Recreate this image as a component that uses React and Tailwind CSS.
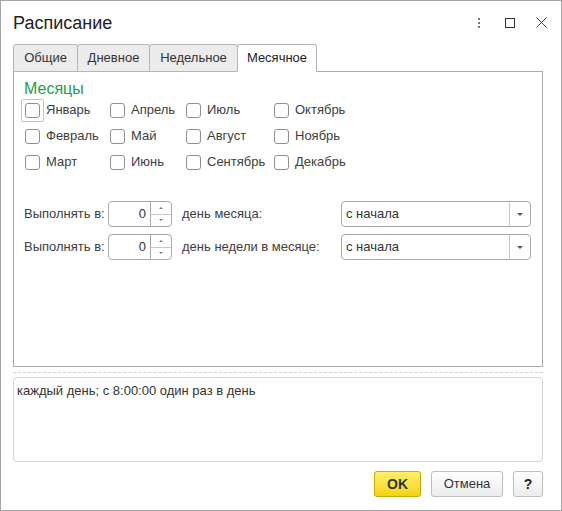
import React, { useState } from "react";

const MONTHS = [
  ["Январь", "Февраль", "Март"],
  ["Апрель", "Май", "Июнь"],
  ["Июль", "Август", "Сентябрь"],
  ["Октябрь", "Ноябрь", "Декабрь"],
];

const COL_WIDTHS = ["w-[85px]", "w-[76px]", "w-[88px]", "w-[90px]"];

const TABS = [
  { name: "Общие", w: "w-[65px]" },
  { name: "Дневное", w: "w-[73px]" },
  { name: "Недельное", w: "w-[89px]" },
  { name: "Месячное", w: "w-[80px]" },
];

const Checkbox = ({ label, checked, focused, onToggle }) => (
  <label className="flex items-center h-[26px] cursor-pointer select-none">
    <span
      className={`flex items-center justify-center w-[23px] h-[23px] -ml-[4px] rounded-[2px] border ${
        focused ? "border-[#f2c94c]" : "border-transparent"
      }`}
      onClick={onToggle}
    >
      <span className="w-[15px] h-[15px] rounded-[3px] border border-[#8f8f8f] bg-white flex items-center justify-center text-[11px] leading-none">
        {checked ? "✓" : ""}
      </span>
    </span>
    <span className="ml-[2px] text-[13px] text-[#404040]">{label}</span>
  </label>
);

const Spinner = ({ value }) => (
  <div className="flex h-[26px] w-[64px] border border-[#a9a9a9] rounded-[4px] bg-white">
    <div className="flex-1 text-right pr-[4px] text-[13px] leading-[24px] text-[#333]">{value}</div>
    <div className="w-[21px] border-l border-[#a9a9a9] flex flex-col">
      <div className="flex-1 flex items-center justify-center border-b border-[#c8c8c8]">
        <span className="w-0 h-0 border-l-[2px] border-r-[2px] border-b-[2px] border-l-transparent border-r-transparent border-b-[#777]" />
      </div>
      <div className="flex-1 flex items-center justify-center">
        <span className="w-0 h-0 border-l-[2px] border-r-[2px] border-t-[2px] border-l-transparent border-r-transparent border-t-[#777]" />
      </div>
    </div>
  </div>
);

const Select = ({ value }) => (
  <div className="flex h-[26px] w-[190px] border border-[#a9a9a9] rounded-[4px] bg-white">
    <div className="flex-1 pl-[4px] text-[13px] leading-[24px] text-[#333]">{value}</div>
    <div className="w-[21px] border-l border-[#c8c8c8] flex items-center justify-center">
      <span className="w-0 h-0 border-l-[3px] border-r-[3px] border-t-[3px] border-l-transparent border-r-transparent border-t-[#555]" />
    </div>
  </div>
);

export default function App() {
  const [checked, setChecked] = useState({});
  const toggle = (m) => setChecked({ ...checked, [m]: !checked[m] });

  return (
    <div
      className="w-[562px] h-[511px] bg-white border border-[#a3a3a3] flex flex-col text-[#333]"
      style={{ fontFamily: '"Liberation Sans", Arial, sans-serif' }}
    >
      {/* Title bar */}
      <div className="h-[43px] flex items-center pl-[12px] pr-[14px] shrink-0">
        <h1 className="text-[18px] text-[#222] flex-1 pt-[1px]">Расписание</h1>
        <div className="flex items-center">
          <span className="flex flex-col gap-[2px] mr-[25px]">
            <span className="w-[2px] h-[2px] bg-[#777]" />
            <span className="w-[2px] h-[2px] bg-[#777]" />
            <span className="w-[2px] h-[2px] bg-[#777]" />
          </span>
          <span className="w-[10px] h-[10px] border border-[#333] mr-[21px]" />
          <svg width="11" height="11" viewBox="0 0 11 11">
            <path d="M0.5 0.5 L10.5 10.5 M10.5 0.5 L0.5 10.5" stroke="#444" strokeWidth="1" />
          </svg>
        </div>
      </div>

      {/* Tabs */}
      <div className="flex items-start pl-[12px] h-[27px] shrink-0">
        {TABS.map((t, i) => {
          const active = i === 3;
          return (
            <div
              key={t.name}
              className={`${t.w} h-[28px] flex items-center justify-center text-[13px] border border-[#b5b5b5] rounded-t-[3px] -mr-[1px] relative ${
                active ? "bg-white border-b-white text-[#222] z-10" : "bg-[#ececec] text-[#333]"
              }`}
            >
              {t.name}
            </div>
          );
        })}
      </div>

      {/* Tab panel */}
      <div className="ml-[12px] w-[530px] h-[296px] border border-[#ababab] shrink-0 pl-[10px] pt-[7px]">
        <div className="text-[16px] text-[#1aa14a] leading-[20px]">Месяцы</div>
        <div className="flex -ml-[2px] -mt-[2px]">
          {MONTHS.map((col, ci) => (
            <div key={ci} className={`${COL_WIDTHS[ci]} flex flex-col pl-[3px]`}>
              {col.map((m) => (
                <Checkbox
                  key={m}
                  label={m}
                  checked={!!checked[m]}
                  focused={m === "Январь"}
                  onToggle={() => toggle(m)}
                />
              ))}
            </div>
          ))}
        </div>

        <div className="mt-[26px] flex flex-col gap-[7px] text-[13px]">
          <div className="flex items-center">
            <span className="w-[84px] text-[#404040]">Выполнять в:</span>
            <Spinner value="0" />
            <span className="ml-[10px] w-[159px] text-[#404040]">день месяца:</span>
            <Select value="с начала" />
          </div>
          <div className="flex items-center">
            <span className="w-[84px] text-[#404040]">Выполнять в:</span>
            <Spinner value="0" />
            <span className="ml-[10px] w-[159px] text-[#404040]">день недели в месяце:</span>
            <Select value="с начала" />
          </div>
        </div>
      </div>

      {/* Splitter */}
      <div className="ml-[12px] w-[530px] mt-[5px] border-t border-dashed border-[#d2d2d2] shrink-0" />

      {/* Description */}
      <div className="ml-[12px] w-[530px] mt-[4px] h-[85px] border border-[#d4d4d4] rounded-[4px] px-[3px] pt-[3px] text-[13px] text-[#333] shrink-0">
        каждый день; с 8:00:00 один раз в день
      </div>

      {/* Footer buttons */}
      <div className="flex justify-end gap-[10px] pr-[18px] mt-[9px]">
        <button className="w-[47px] h-[26px] rounded-[3px] border border-[#c9a800] bg-gradient-to-b from-[#fff066] to-[#f2d400] text-[14px] font-bold text-[#333]">
          OK
        </button>
        <button className="w-[72px] h-[26px] rounded-[3px] border border-[#bdbdbd] bg-gradient-to-b from-white to-[#ececec] text-[13px] text-[#333]">
          Отмена
        </button>
        <button className="w-[30px] h-[26px] rounded-[3px] border border-[#bdbdbd] bg-gradient-to-b from-white to-[#ececec] text-[14px] font-bold text-[#222]">
          ?
        </button>
      </div>
    </div>
  );
}
